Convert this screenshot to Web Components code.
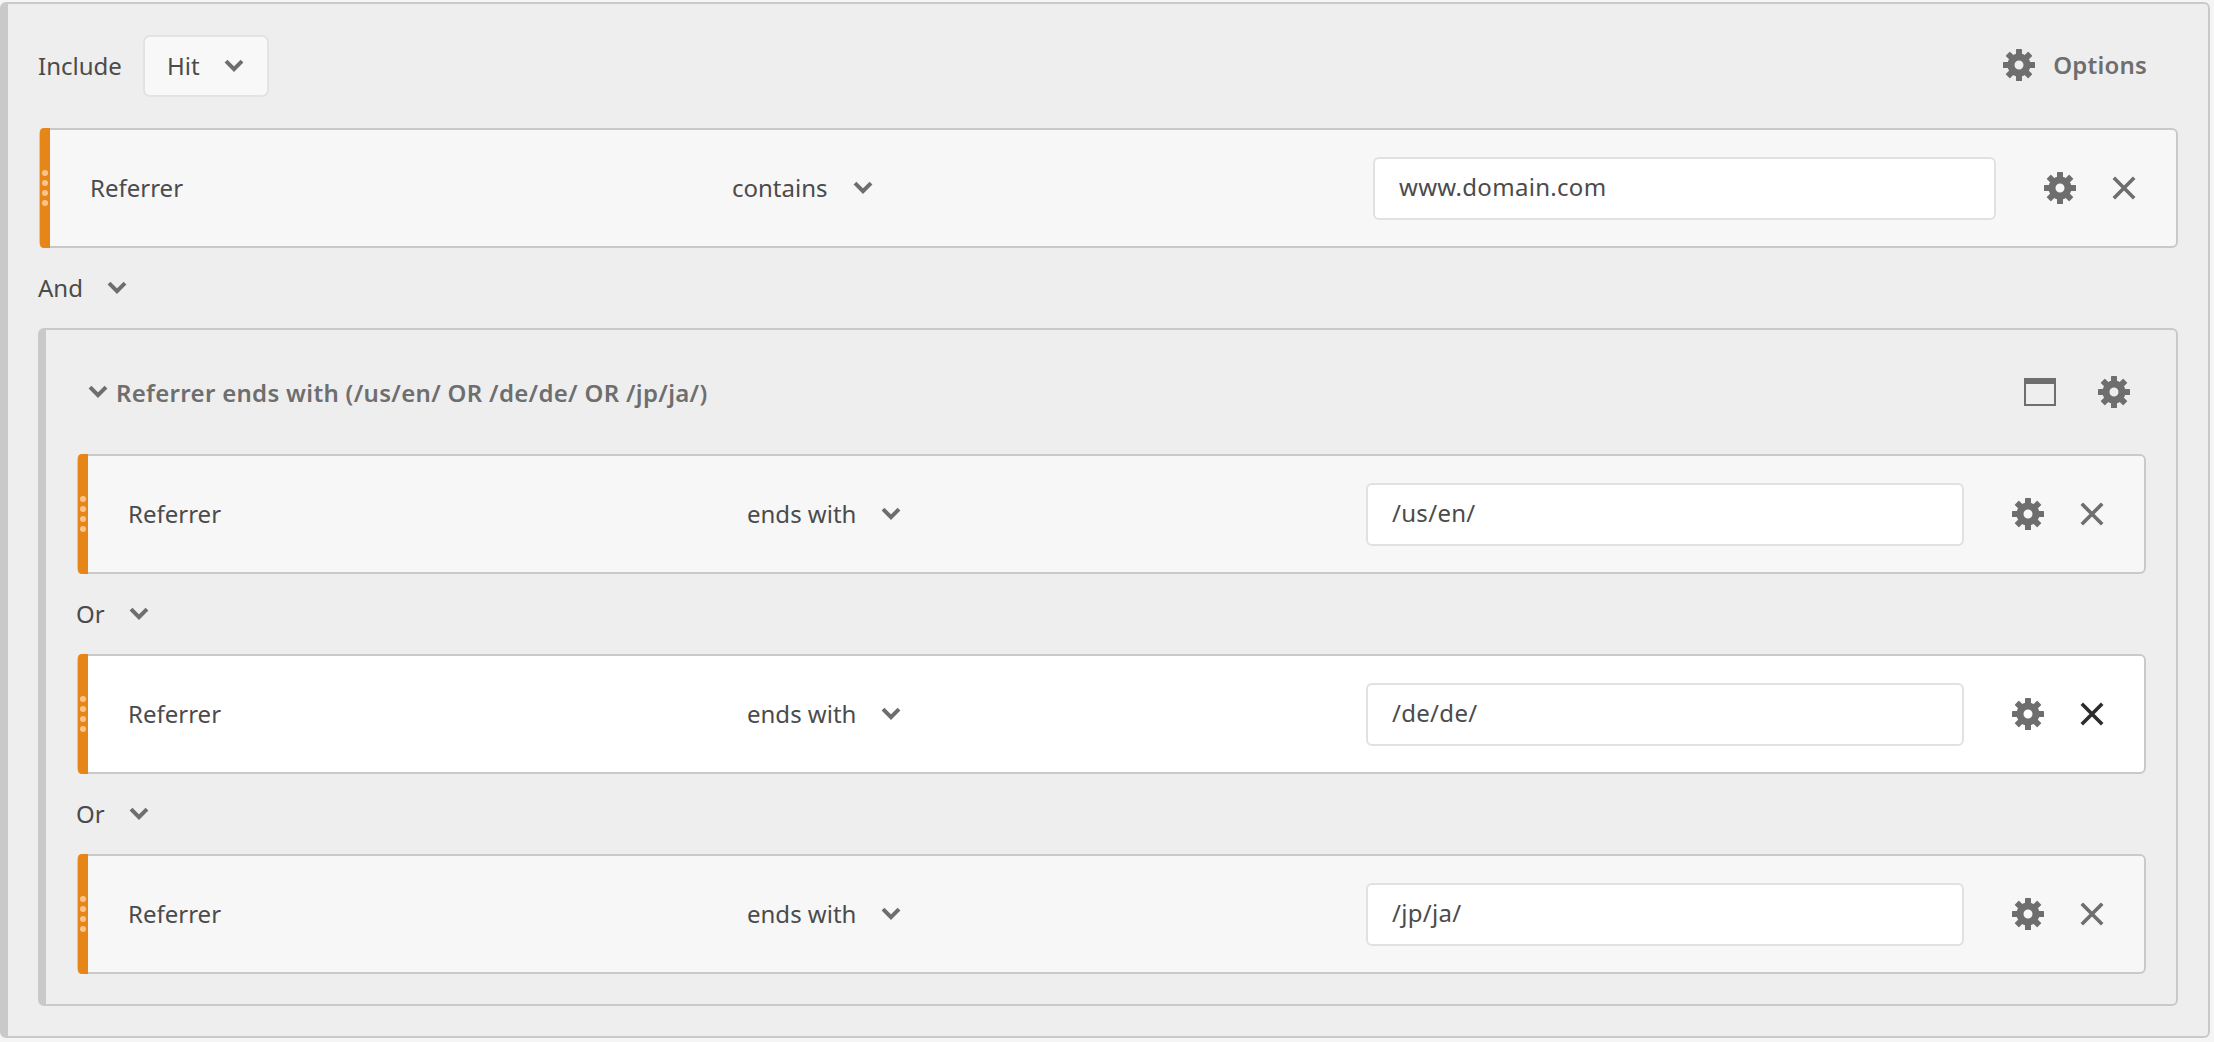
<!DOCTYPE html>
<html>
<head>
<meta charset="utf-8">
<style>
  html, body { margin: 0; background: #f5f5f5; }
  body { padding-top: 2px; font-family: 'Noto Sans', 'Open Sans', sans-serif; font-size: 24px; color: #4b4b4b; }
</style>
</head>
<body>
<seg-panel>
  <seg-rule style="margin-left:1px" label-w="682" op-w="641" value="www.domain.com" op="contains">Referrer</seg-rule>
  <seg-conj>And</seg-conj>
  <seg-group title="Referrer ends with (/us/en/ OR /de/de/ OR /jp/ja/)">
    <seg-rule style="margin-left:1px" label-w="659" op-w="619" value="/us/en/" op="ends with">Referrer</seg-rule>
    <seg-conj>Or</seg-conj>
    <seg-rule style="margin-left:1px" active label-w="659" op-w="619" value="/de/de/" op="ends with">Referrer</seg-rule>
    <seg-conj>Or</seg-conj>
    <seg-rule style="margin-left:1px" label-w="659" op-w="619" value="/jp/ja/" op="ends with">Referrer</seg-rule>
  </seg-group>
</seg-panel>
<script>
const chevron = `<svg width="20" height="14" viewBox="0 0 20 14"><path d="M2 2.2 10 10.2l8-8" fill="none" stroke="currentColor" stroke-width="4"/></svg>`;
const teeth = [0, 45, 90, 135, 180, 225, 270, 315]
  .map(a => `<rect x="13" y="0" width="6" height="7" rx="0.6" transform="rotate(${a} 16 16)"/>`).join('');
const gear = `<svg width="32" height="32" viewBox="0 0 32 32" fill="currentColor">${teeth}<path fill-rule="evenodd" d="M16 4.5a11.5 11.5 0 1 0 0 23 11.5 11.5 0 0 0 0-23Zm0 7a4.5 4.5 0 1 1 0 9 4.5 4.5 0 0 1 0-9Z"/></svg>`;
const cross = `<svg width="24" height="24" viewBox="0 0 24 24"><path d="M1.8 1.8l20.4 20.4M22.2 1.8 1.8 22.2" fill="none" stroke="currentColor" stroke-width="3.6"/></svg>`;
const windowIcon = `<svg width="32" height="28" viewBox="0 0 32 28"><rect x="1" y="1" width="30" height="26" fill="none" stroke="currentColor" stroke-width="2"/><rect x="0" y="0" width="32" height="6" fill="currentColor"/></svg>`;

class SegPanel extends HTMLElement {
  connectedCallback() {
    const root = this.attachShadow({ mode: 'open' });
    root.innerHTML = `
    <style>
      :host { display: block; box-sizing: border-box; width: 2210px; height: 1036px; padding: 31px 30px 30px 30px; background: #eeeeee; border: 2px solid #c9c9c9; border-left-width: 8px; border-radius: 6px; }
      .head { display: flex; align-items: center; height: 62px; margin-bottom: 31px; }
      .include { width: 105px; padding-bottom: 2px; }
      .pick { box-sizing: border-box; display: flex; align-items: center; width: 126px; height: 62px; padding-left: 22px; gap: 24px; background: #f8f8f8; border: 2px solid #e3e3e3; border-radius: 7px; }
      .pick span { padding-bottom: 2px; }
      .pick svg { color: #6e6e6e; }
      .opts { margin-left: auto; display: flex; align-items: center; gap: 18px; padding-right: 31px; color: #6e6e6e; font-weight: 600; letter-spacing: 0.2px; }
      .opts svg { margin-top: -2px; }
      .opts span { padding-bottom: 4px; }
    </style>
    <div class="head">
      <span class="include">Include</span>
      <div class="pick"><span>Hit</span>${chevron}</div>
      <div class="opts">${gear}<span>Options</span></div>
    </div>
    <slot></slot>`;
  }
}

class SegRule extends HTMLElement {
  connectedCallback() {
    const root = this.attachShadow({ mode: 'open' });
    const labelW = this.getAttribute('label-w');
    const opW = this.getAttribute('op-w');
    root.innerHTML = `
    <style>
      :host { display: flex; box-sizing: border-box; height: 120px; background: #f7f7f7; border: 2px solid #c9c9c9; border-left-width: 1px; border-radius: 6px; align-items: center; }
      :host([active]) { background: #ffffff; }
      .bar { align-self: stretch; width: 10px; margin: -2px 0; background: #e68619; border-radius: 4px 0 0 4px; display: flex; flex-direction: column; align-items: center; justify-content: center; gap: 4px; }
      .bar i { width: 6px; height: 6px; border-radius: 50%; background: #f9c48a; }
      .label { width: ${labelW}px; padding: 0 0 2px 40px; box-sizing: border-box; }
      .op { width: ${opW}px; display: flex; align-items: center; gap: 25px; }
      .op span { padding-bottom: 2px; }
      .op svg, .icons { color: #6e6e6e; }
      .field { box-sizing: border-box; flex: 1 1 auto; height: 63px; display: flex; align-items: center; padding: 0 0 3px 24px; background: #ffffff; border: 2px solid #e1e1e1; border-radius: 6px; letter-spacing: 0.3px; }
      .icons { display: flex; align-items: center; gap: 36px; padding: 0 40px 0 48px; }
      :host([active]) .close { color: #2c2c2c; }
      .icons span { display: flex; }
    </style>
    <div class="bar"><i></i><i></i><i></i><i></i></div>
    <div class="label"><slot></slot></div>
    <div class="op"><span>${this.getAttribute('op')}</span>${chevron}</div>
    <div class="field">${this.getAttribute('value')}</div>
    <div class="icons"><span>${gear}</span><span class="close">${cross}</span></div>`;
  }
}

class SegConj extends HTMLElement {
  connectedCallback() {
    const root = this.attachShadow({ mode: 'open' });
    root.innerHTML = `
    <style>
      :host { display: flex; align-items: center; gap: 24px; height: 80px; }
      span { padding-bottom: 2px; }
      svg { color: #6e6e6e; }
    </style>
    <span><slot></slot></span>${chevron}`;
  }
}

class SegGroup extends HTMLElement {
  connectedCallback() {
    const root = this.attachShadow({ mode: 'open' });
    root.innerHTML = `
    <style>
      :host { display: block; box-sizing: border-box; height: 678px; padding: 0 30px 30px 30px; background: #eeeeee; border: 2px solid #c9c9c9; border-left-width: 8px; border-radius: 6px; }
      .head { display: flex; align-items: center; height: 124px; color: #6e6e6e; font-weight: 600; }
      .title { display: flex; align-items: center; gap: 8px; margin-left: 12px; letter-spacing: 0.3px; }
      .tools { margin-left: auto; display: flex; align-items: center; gap: 42px; padding-right: 16px; margin-top: -1px; }
      .tools svg { display: block; }
    </style>
    <div class="head">
      <div class="title">${chevron}<span>${this.getAttribute('title')}</span></div>
      <div class="tools">${windowIcon}${gear}</div>
    </div>
    <slot></slot>`;
  }
}

customElements.define('seg-panel', SegPanel);
customElements.define('seg-rule', SegRule);
customElements.define('seg-conj', SegConj);
customElements.define('seg-group', SegGroup);
</script>
</body>
</html>
